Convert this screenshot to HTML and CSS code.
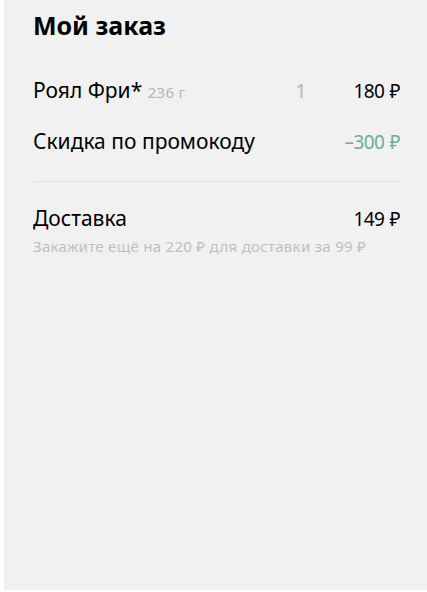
FILE: index.html
```html
<!DOCTYPE html>
<html lang="ru">
<head>
<meta charset="utf-8">
<link rel="stylesheet" href="styles.css">
</head>
<body>
<div class="panel">
  <h1 class="title">Мой заказ</h1>
  <div class="row item">
    <div class="name">Роял Фри* <span class="weight">236 г</span></div>
    <div class="qty">1</div>
    <div class="price">180 ₽</div>
  </div>
  <div class="row discount">
    <div class="name">Скидка по промокоду</div>
    <div class="price green">–300 ₽</div>
  </div>
  <div class="divider"></div>
  <div class="row delivery">
    <div class="name">Доставка</div>
    <div class="price">149 ₽</div>
  </div>
  <div class="hint">Закажите ещё на 220 ₽ для доставки за 99 ₽</div>
</div>
</body>
</html>
```
FILE: styles.css
```css
html, body {
  margin: 0;
  padding: 0;
  background: #fff;
}
body {
  font-family: "Noto Sans", "Open Sans", sans-serif;
  color: #000;
}
.panel {
  margin-left: 4px;
  height: 590px;
  background: #f1f1f1;
  padding: 0 27px 0 29px;
  box-sizing: border-box;
  display: flex;
  flex-direction: column;
}
.title {
  margin: 9px 0 0;
  font-size: 25px;
  font-weight: 700;
  line-height: 32px;
}
.row {
  display: flex;
  align-items: baseline;
  font-size: 21px;
  line-height: 26px;
}
.item { margin-top: 36px; }
.discount { margin-top: 23px; }
.name { flex: 1; }
.weight {
  font-size: 15px;
  letter-spacing: 0.3px;
  color: #b5b5b5;
}
.qty {
  color: #b5b5b5;
  font-size: 19px;
  width: 58px;
}
.price {
  text-align: right;
  font-size: 19px;
  letter-spacing: -0.6px;
  word-spacing: 1px;
}
.green { color: #6cb08c; }
.divider {
  height: 1px;
  background: #e0e0e0;
  margin-top: 26px;
}
.delivery { margin-top: 23px; }
.hint {
  font-size: 15px;
  letter-spacing: 0.3px;
  color: #bfbfbf;
  line-height: 20px;
  margin-top: 4px;
}
```
